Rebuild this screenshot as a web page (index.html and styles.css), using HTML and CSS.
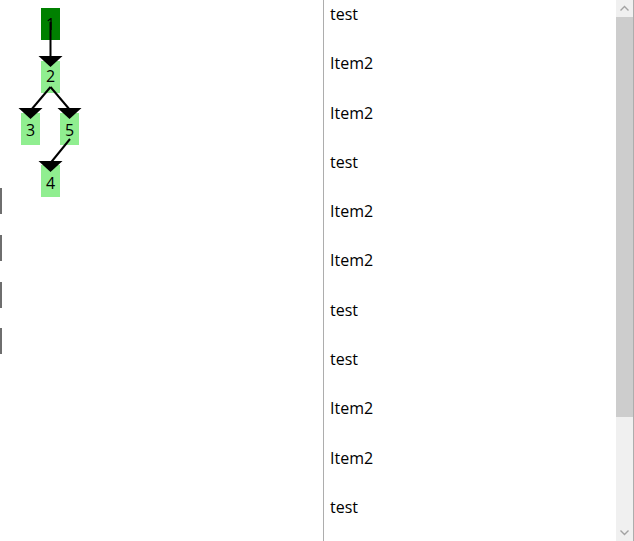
FILE: index.html
```html
<!DOCTYPE html>
<html>
<head>
<meta charset="utf-8">
<link rel="stylesheet" href="styles.css">
</head>
<body>
<div class="app">
  <div class="canvas">
    <svg class="tree" width="323" height="541" viewBox="0 0 323 541">
      <rect x="41" y="8" width="19" height="32" fill="#008000"/>
      <rect x="41" y="61" width="19" height="32" fill="#90ee90"/>
      <rect x="21" y="113" width="19" height="32" fill="#90ee90"/>
      <rect x="60" y="113" width="19" height="32" fill="#90ee90"/>
      <rect x="41" y="165" width="19" height="32" fill="#90ee90"/>
      <text x="50.5" y="30" class="nl">1</text>
      <text x="50.5" y="82" class="nl">2</text>
      <text x="30.5" y="136" class="nl">3</text>
      <text x="69.5" y="136" class="nl">5</text>
      <text x="50.5" y="189" class="nl">4</text>
      <g stroke="#000" stroke-width="2" fill="none">
        <line x1="50.5" y1="22" x2="50.5" y2="60"/>
        <line x1="50.5" y1="87" x2="31" y2="110"/>
        <line x1="50.5" y1="87" x2="70" y2="110"/>
        <line x1="70" y1="139" x2="50.5" y2="163"/>
      </g>
      <g fill="#000">
        <polygon points="38.5,56 62.5,56 50.5,67"/>
        <polygon points="18.5,108 42.5,108 30.5,119"/>
        <polygon points="57.5,108 81.5,108 69.5,119"/>
        <polygon points="38.5,161 62.5,161 50.5,172"/>
      </g>
      <g fill="#6e6e6e">
        <rect x="0" y="188" width="2" height="26"/>
        <rect x="0" y="235" width="2" height="26"/>
        <rect x="0" y="282" width="2" height="26"/>
        <rect x="0" y="328" width="2" height="26"/>
      </g>
    </svg>
  </div>
  <div class="listbox">
    <ul class="items">
      <li class="item">test</li>
      <li class="item">Item2</li>
      <li class="item">Item2</li>
      <li class="item">test</li>
      <li class="item">Item2</li>
      <li class="item">Item2</li>
      <li class="item">test</li>
      <li class="item">test</li>
      <li class="item">Item2</li>
      <li class="item">Item2</li>
      <li class="item">test</li>
    </ul>
    <div class="scrollbar">
      <div class="sb-btn">
        <svg width="17" height="17" viewBox="0 0 17 17"><polyline points="4.5,10.5 8.5,6.5 12.5,10.5" fill="none" stroke="#a3a3a3" stroke-width="1.4"/></svg>
      </div>
      <div class="sb-thumb"></div>
      <div class="sb-track"></div>
      <div class="sb-btn">
        <svg width="17" height="17" viewBox="0 0 17 17"><polyline points="4.5,6.5 8.5,10.5 12.5,6.5" fill="none" stroke="#a3a3a3" stroke-width="1.4"/></svg>
      </div>
    </div>
  </div>
</div>
</body>
</html>
```
FILE: styles.css
```css
html, body {
  margin: 0;
  padding: 0;
  background: #ffffff;
  overflow: hidden;
}
.app {
  display: flex;
  width: 634px;
  height: 541px;
}
.canvas {
  width: 323px;
  flex: none;
}
.tree {
  display: block;
}
.nl {
  font-family: "Open Sans", "Noto Sans", sans-serif;
  font-size: 16px;
  text-anchor: middle;
  fill: #000;
}
.listbox {
  flex: 1;
  display: flex;
  border-left: 1px solid #adadad;
  border-right: 1px solid #adadad;
  height: 541px;
  overflow: hidden;
}
.items {
  flex: 1;
  list-style: none;
  margin: 0;
  padding: 0;
  font-family: "Open Sans", "Noto Sans", sans-serif;
  font-size: 16px;
  color: #000;
}
.item {
  height: 49.3px;
  padding-left: 6px;
  line-height: 28px;
}
.scrollbar {
  width: 17px;
  flex: none;
  display: flex;
  flex-direction: column;
  background: #f0f0f0;
}
.sb-btn {
  height: 17px;
  flex: none;
}
.sb-btn svg {
  display: block;
}
.sb-thumb {
  height: 400px;
  flex: none;
  background: #cdcdcd;
}
.sb-track {
  flex: 1;
}
```
